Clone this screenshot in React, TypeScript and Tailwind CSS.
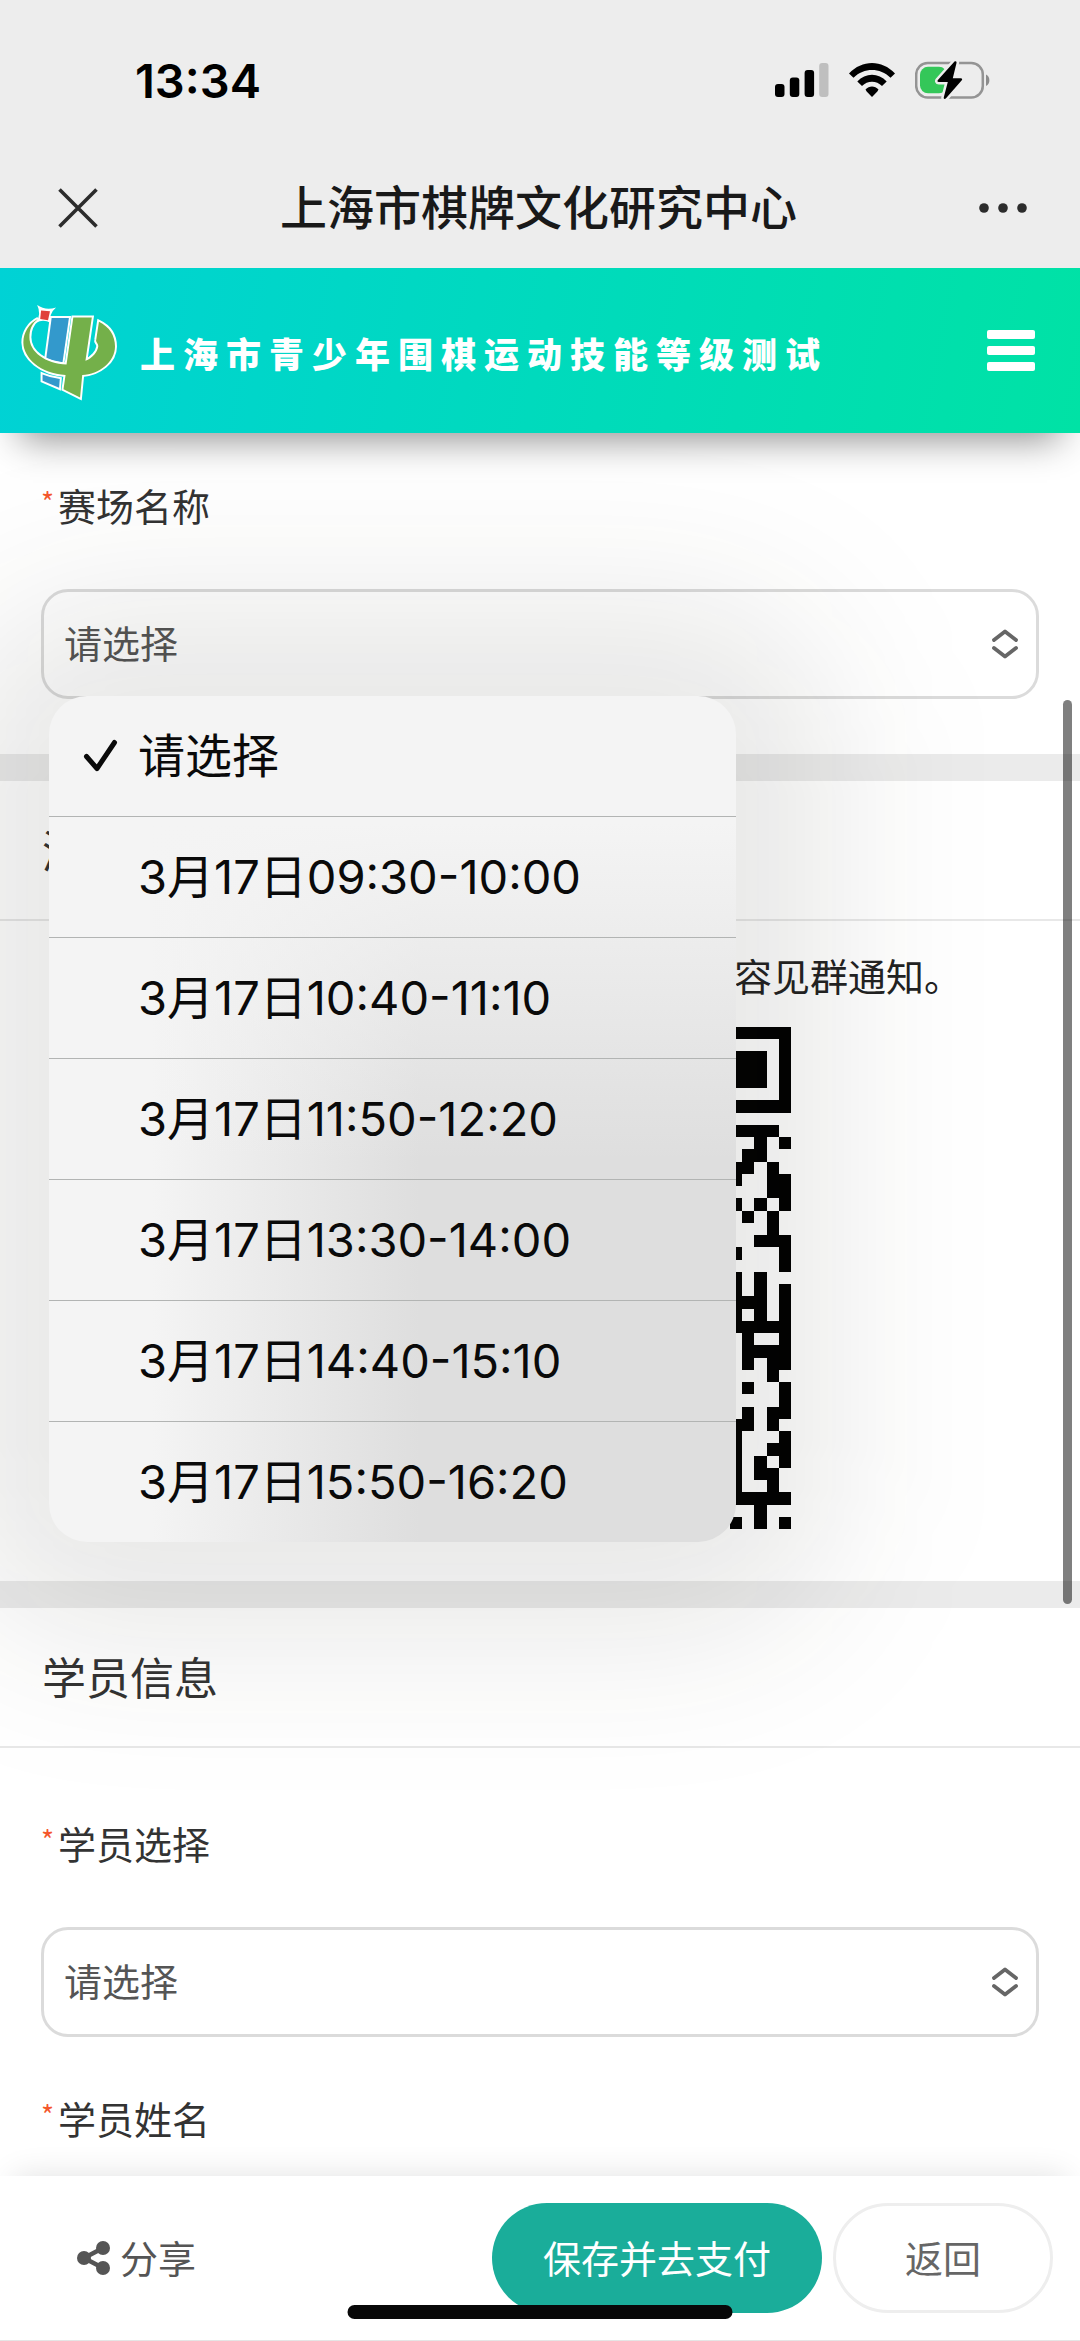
import type { ReactNode } from "react";

const SLOTS = [
  "请选择",
  "3月17日09:30-10:00",
  "3月17日10:40-11:10",
  "3月17日11:50-12:20",
  "3月17日13:30-14:00",
  "3月17日14:40-15:10",
  "3月17日15:50-16:20",
];

// rightmost five columns of the 41x41 group code, top to bottom
const QR_ROWS = [
  "11111", "00001", "11101", "11101", "11101", "00001", "11111", "00000",
  "11110", "00101", "01100", "11010", "10011", "00011", "10101", "01010",
  "00010", "00111", "10001", "00001", "10100", "10101", "11101", "10101",
  "11111", "01001", "01111", "01011", "00010", "01001", "00001", "01011",
  "11010", "10001", "10011", "10101", "10110", "10010", "11111", "00100",
  "10101",
];

function StatusBar() {
  return (
    <div className="flex h-[160px] items-center justify-between pl-[135px] pr-[89px]">
      <span className="font-['Inter',sans-serif] text-[47px] font-semibold leading-none text-black">
        13:34
      </span>
      <div className="flex items-center gap-5">
        <svg className="h-9 w-[54px]" viewBox="0 0 54 36" aria-hidden="true">
          <rect x="0" y="22" width="9.5" height="13" rx="3" />
          <rect x="14.8" y="15.500" width="9.500" height="19.500" rx="3" />
          <rect x="29.600" y="8" width="9.500" height="27" rx="3" />
          <rect x="44.200" y="1" width="9.300" height="34" rx="3" fill="#bfbfbf" />
        </svg>
        <svg className="h-9 w-[46px]" viewBox="0 0 46 36" aria-hidden="true">
          <path d="M0 11.500C13-2.500 33-2.500 46 11.500L41.500 15.800C31 5.500 15 5.500 4.500 15.800Z" />
          <path d="M8.300 19.500C16.500 10.500 29.500 10.500 37.700 19.500L33 24C27.500 18.200 18.500 18.200 13 24Z" />
          <path d="M16.500 27.500C20.200 23.600 25.800 23.600 29.500 27.500C28.500 30 25 32.500 23 35C21 32.500 17.500 30 16.500 27.500Z" />
        </svg>
        <svg className="h-10 w-[76px]" viewBox="0 0 76 40" aria-hidden="true">
          <rect x="1.200" y="3" width="66.600" height="34.600" rx="11.500" fill="none" stroke="#949494" strokeWidth="2.500" />
          <path d="M71 14.500c4.500 2 4.500 9.500 0 11.500z" fill="#8c8c8c" />
          <rect x="5" y="6.800" width="27" height="26.500" rx="8" fill="#34c759" />
          <path
            d="M39.500 1.500c1.500-.8 2.300 0 2 1.500l-3.700 15.200h8c1.500 0 1.700 1 1 2L30.800 38.500c-1.500 1-2.300.2-2-1.200l4-15.300h-9c-1.400 0-1.700-1-.9-2z"
            stroke="#ededed"
            strokeWidth="5"
            paintOrder="stroke"
          />
        </svg>
      </div>
    </div>
  );
}

function TitleBar() {
  return (
    <div className="flex h-[108px] items-center justify-between pb-3 pl-[58px] pr-[53px]">
      <button type="button" aria-label="关闭" className="size-[40px]">
        <svg viewBox="0 0 40 40" fill="none" stroke="#2c2c2c" strokeWidth="3.600">
          <path d="M1.500 1.500l37 37M38.500 1.500l-37 37" />
        </svg>
      </button>
      <h1 className="pb-2 text-[47px] font-medium leading-none text-[#191919]">上海市棋牌文化研究中心</h1>
      <button type="button" aria-label="更多" className="h-[40px] w-[48px]">
        <svg viewBox="0 0 48 40" fill="#2c2c2c">
          <circle cx="5" cy="20" r="4.800" />
          <circle cx="24" cy="20" r="4.800" />
          <circle cx="43" cy="20" r="4.800" />
        </svg>
      </button>
    </div>
  );
}

function Logo() {
  return (
    <svg className="size-[95px] shrink-0 overflow-visible" viewBox="0 0 97 97" aria-hidden="true">
      <g stroke="#fff" strokeWidth="4" paintOrder="stroke" strokeLinejoin="miter">
        <path d="M31.300 13.300H48.900L42.400 58.500Q33 57.500 25.800 54.300Z" fill="#3399cc" />
        <path d="M22 71Q30 74.500 39.600 75.500L38.900 84.500L22 77.300Z" fill="#3399cc" />
        <path
          d="M53.400 12.700H72.300L65.800 57C73 54 78 48 78.900 42.300C79 39 76 38 76.800 35.500L79.600 17C90 22 96 31 96 42.300C96 58 80 70.500 62.500 71.500L60.300 94.500L43.400 86L45.500 71.500C20 70 2.400 54 2.400 38.300C2.400 28 8 19 17.600 14C11 19 8.600 25 8.600 33C8.600 48 25 60 46.500 60.800Z"
          fill="#74b04a"
        />
      </g>
      <path d="M16.500 0Q25 6 35.800 2.500Q28 9 30.500 18.500Q23 14 15.500 18Q21 9 16.500 0Z" fill="#fff" />
      <path d="M20.500 5.500L29.600 6.500L27.600 15.500L19.600 14.300Z" fill="#e0403a" />
    </svg>
  );
}

function SiteHeader() {
  return (
    <header className="relative z-20 flex h-[165px] shrink-0 items-center bg-linear-[100deg] from-[#00d2d5] to-[#00e2a5] pl-[21px] pr-[45px] pt-1 shadow-[0_26px_36px_-20px_rgba(0,0,0,0.45)]">
      <Logo />
      <p className="ml-6 w-[680px] text-[35px] font-black leading-none text-white [text-align-last:justify]">
        上海市青少年围棋运动技能等级测试
      </p>
      <button type="button" aria-label="菜单" className="mb-1 ml-auto flex w-12 flex-col gap-[7px]">
        <span className="h-[9px] rounded-[2px] bg-white" />
        <span className="h-[9px] rounded-[2px] bg-white" />
        <span className="h-[9px] rounded-[2px] bg-white" />
      </button>
    </header>
  );
}

function FieldLabel({ htmlFor, children }: { htmlFor: string; children: ReactNode }) {
  return (
    <label htmlFor={htmlFor} className="flex h-14 items-center pb-1 text-[38px] leading-[52px] text-[#333]">
      <span className="w-[17px] pb-2 text-[28px] leading-none text-[#f4572c]">*</span>
      {children}
    </label>
  );
}

function SelectField({ id }: { id: string }) {
  return (
    <div className="relative">
      <select
        id={id}
        className="block h-[110px] w-full appearance-none rounded-[27px] border-3 border-black/14 bg-transparent px-5 pb-1.5 text-[38px] text-[#555]"
      >
        <option>请选择</option>
      </select>
      <svg
        className="pointer-events-none absolute right-[21px] top-10 h-[30px] w-[26px]"
        viewBox="0 0 26 30"
        fill="none"
        stroke="#666"
        strokeWidth="3.800"
        strokeLinecap="round"
        strokeLinejoin="round"
      >
        <path d="M2 11L13 2.500L24 11M2 19L13 27.500L24 19" />
      </svg>
    </div>
  );
}

function SectionTitle({ children }: { children: ReactNode }) {
  return (
    <h2 className="h-[140px] border-b-2 border-black/9 px-[42px] text-[44px] font-normal leading-[136px] text-[#333]">
      {children}
    </h2>
  );
}

function Band() {
  return <div className="h-[27px] bg-[#ebebeb]" />;
}

function SlotMenu() {
  return (
    <div className="absolute left-2 top-full z-10 -mt-[3px] w-[687px]">
      {/* wide ambient shadow under the menu */}
      <div className="pointer-events-none absolute -inset-24 rounded-[140px] bg-[#191910]/10 blur-[80px]" />
      <ul
        role="listbox"
        aria-label="赛场名称"
        className="relative rounded-[38px] bg-[#f4f4f4] bg-[linear-gradient(to_bottom,#f4f4f4_15%,transparent_55%),linear-gradient(to_right,#f4f4f4_15%,#dedede_54%)] font-['Inter','Noto_Sans_CJK_SC',sans-serif] text-[47px] text-[#0a0a0a]"
      >
        {SLOTS.map((slot, i) => (
          <li
            key={slot}
            role="option"
            aria-selected={i === 0}
            className="flex h-[121px] items-center border-b border-[#b2b4b3] pl-[34px] last:h-[120px] last:border-b-0"
          >
            <span className="w-[55px] shrink-0">
              {i === 0 && (
                <svg
                  className="h-[34px] w-[36px]"
                  viewBox="0 0 36 34"
                  fill="none"
                  stroke="#0a0a0a"
                  strokeWidth="5"
                  strokeLinecap="round"
                  strokeLinejoin="round"
                >
                  <path d="M3.500 17.500L14 29.500L31.500 3.500" />
                </svg>
              )}
            </span>
            {slot}
          </li>
        ))}
      </ul>
    </div>
  );
}

function GroupCode() {
  return (
    <svg className="mx-auto mt-[22px] block size-[502px]" viewBox="0 0 41 41" shapeRendering="crispEdges" role="img" aria-label="二维码">
      {QR_ROWS.map((row, y) =>
        row.split("").map((cell, x) =>
          cell === "1" ? <rect key={`${x}-${y}`} x={36 + x} y={y} width="1" height="1" /> : null
        )
      )}
    </svg>
  );
}

function ShareIcon() {
  return (
    <svg className="mt-1 h-[34px] w-[33px]" viewBox="0 0 33 34" fill="#555" stroke="#555" aria-hidden="true">
      <path d="M26 7L7 17l19 10" fill="none" strokeWidth="4.500" />
      <circle cx="26" cy="7" r="7" stroke="none" />
      <circle cx="7" cy="17" r="7" stroke="none" />
      <circle cx="26" cy="27" r="7" stroke="none" />
    </svg>
  );
}

function ActionBar() {
  return (
    <footer className="relative z-20 flex h-[165px] shrink-0 items-start border-b border-[#e5e5e5] bg-white pl-[77px] pr-[27px] pt-[27px] text-[38px] shadow-[0_-14px_30px_-14px_rgba(0,0,0,0.12)]">
      <button type="button" className="flex h-[110px] items-center gap-2.5 pb-1 text-[#555]">
        <ShareIcon />
        分享
      </button>
      <button type="button" className="ml-auto h-[110px] w-[330px] rounded-full bg-[#1aad9a] pb-1 text-white">
        保存并去支付
      </button>
      <button type="button" className="ml-[11px] h-[110px] w-[220px] rounded-full border-3 border-[#eee] pb-1 text-[#666]">
        返回
      </button>
      <div className="absolute bottom-[21px] left-1/2 h-[14px] w-[385px] -translate-x-1/2 rounded-full bg-[#080808]" />
    </footer>
  );
}

export default function App() {
  return (
    <div className="relative flex h-screen flex-col overflow-hidden bg-white font-['Noto_Sans_CJK_SC',sans-serif]">
      <div className="relative z-20 shrink-0 bg-[#ededed]">
        <StatusBar />
        <TitleBar />
      </div>
      <SiteHeader />

      <main className="relative min-h-0 flex-1 overflow-hidden">
        <section className="px-[41px] pb-[55px] pt-[46px]">
          <FieldLabel htmlFor="venue">赛场名称</FieldLabel>
          <div className="relative mt-[54px]">
            <SelectField id="venue" />
            <SlotMenu />
          </div>
        </section>
        <Band />
        <section className="pb-[52px]">
          <SectionTitle>测</SectionTitle>
          <p className="pb-1 pr-[118px] pt-7 text-right text-[38px] leading-[52px] text-[#222]">容见群通知。</p>
          <GroupCode />
        </section>
        <Band />
        <section>
          <SectionTitle>学员信息</SectionTitle>
          <div className="px-[41px] pt-[69px]">
            <FieldLabel htmlFor="student">学员选择</FieldLabel>
            <div className="mb-[55px] mt-[54px]">
              <SelectField id="student" />
            </div>
            <FieldLabel htmlFor="student-name">学员姓名</FieldLabel>
            <input id="student-name" type="text" className="mt-[54px] h-[110px] w-full rounded-[27px] border-3 border-black/14 px-5 text-[38px]" />
          </div>
        </section>
        {/* scroll indicator */}
        <div className="absolute right-2 top-[267px] z-10 h-[904px] w-[9px] rounded-full bg-black/50" />
      </main>

      <ActionBar />
    </div>
  );
}
